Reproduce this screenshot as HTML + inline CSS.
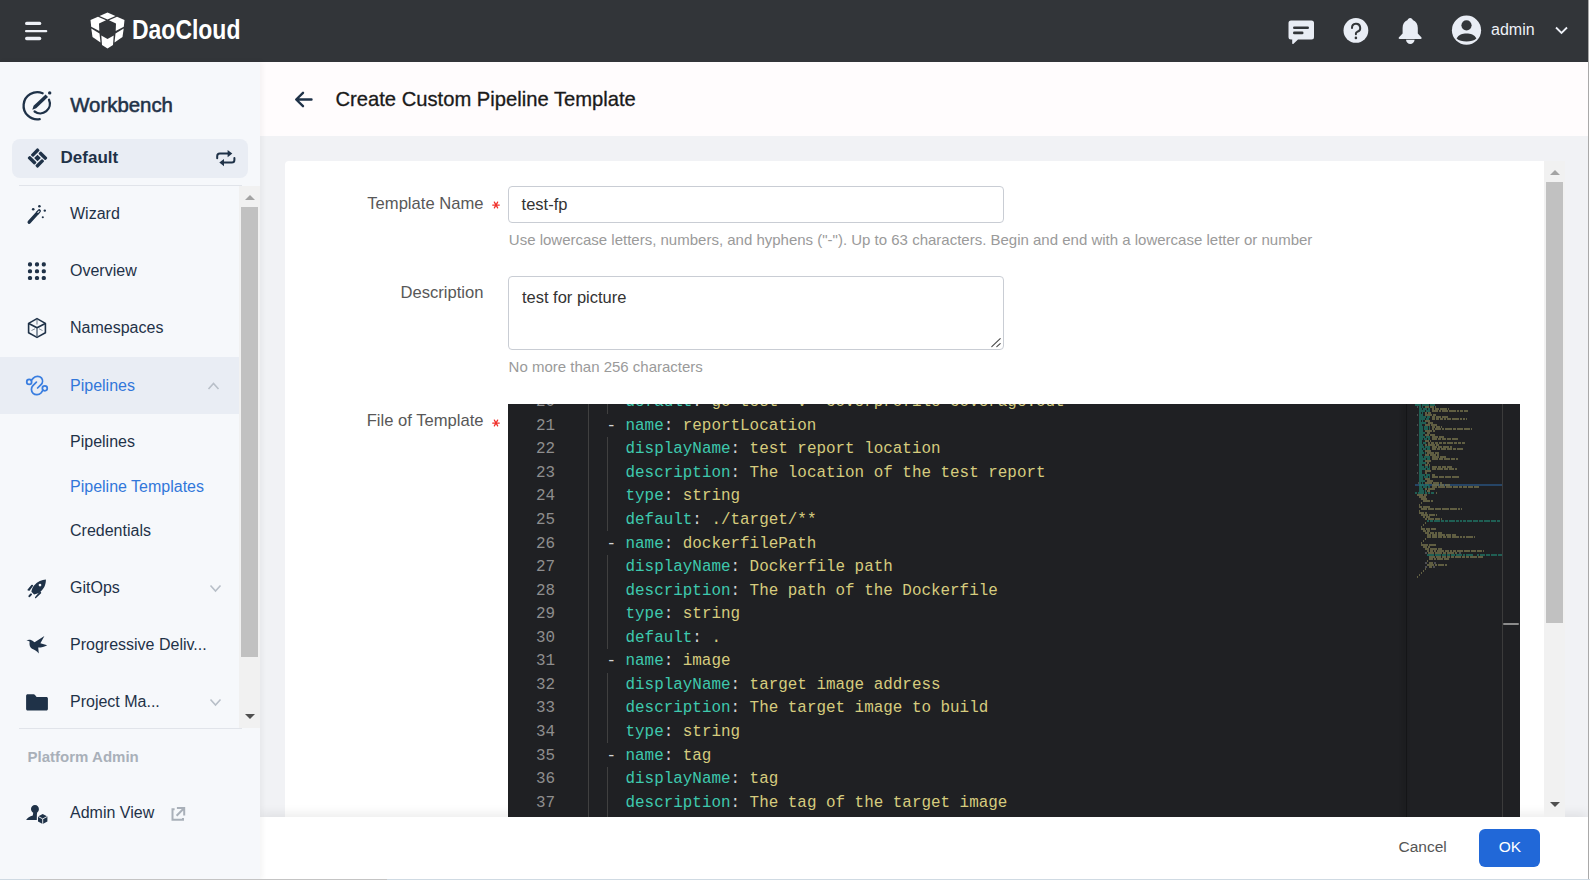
<!DOCTYPE html>
<html><head><meta charset="utf-8"><title>Create Custom Pipeline Template</title>
<style>
html,body{margin:0;padding:0;}
body{width:1590px;height:880px;overflow:hidden;position:relative;background:#f6f8fb;font-family:"Liberation Sans", sans-serif;}
.t{position:absolute;white-space:nowrap;line-height:1;}
.r{position:absolute;}
.a{position:absolute;display:block;}
.m{position:absolute;white-space:pre;font-family:"Liberation Mono", monospace;font-size:15.92px;line-height:1;}
</style></head><body>
<div class="r" style="left:0px;top:0px;width:1588px;height:62px;background:#323539"></div>
<div class="r" style="left:260px;top:62px;width:1328px;height:74px;background:#fffcfd"></div>
<div class="r" style="left:260px;top:136px;width:1328px;height:681px;background:#f1f2f5"></div>
<div class="r" style="left:285px;top:161px;width:1279px;height:669px;background:#ffffff;border-radius:4px 4px 0 0"></div>
<div class="r" style="left:260px;top:817px;width:1328px;height:63px;background:#ffffff;box-shadow:0 -4px 10px rgba(0,0,0,0.07)"></div>
<div class="r" style="left:0px;top:62px;width:260px;height:818px;background:#f6f8fb;box-shadow:2px 0 6px rgba(0,0,0,0.05)"></div>
<div class="r" style="left:1588px;top:0px;width:1px;height:880px;background:#a9a9a9"></div>
<div class="r" style="left:1589px;top:0px;width:1px;height:880px;background:#ffffff"></div>
<div class="r" style="left:0px;top:879px;width:1590px;height:1px;background:#cfdae3"></div>
<div class="r" style="left:30px;top:879px;width:357px;height:1px;background:#c4c4c4"></div>
<svg class="a" style="left:24px;top:21px" width="24" height="20" viewBox="0 0 24 20">
<rect x="1" y="0.7" width="16.3" height="3.4" rx="1.7" fill="#eef1f7"/>
<rect x="1" y="9" width="22.3" height="2.3" rx="1.1" fill="#eef1f7"/>
<rect x="1" y="15.8" width="16.3" height="3.4" rx="1.7" fill="#eef1f7"/>
</svg><svg class="a" style="left:90px;top:12px" width="35" height="37" viewBox="0 0 35 37">
<g fill="#ffffff">
<polygon points="9.5,4 17.5,0.5 25.5,4 17.5,7.6"/>
<polygon points="0.5,8 8,4.7 16,8.3 9,11.5 9.3,19 1.2,14.7"/>
<polygon points="34.5,8 27,4.7 19,8.3 26,11.5 25.7,19 33.8,14.7"/>
<polygon points="1.3,16.5 9.5,21.5 10.5,30.5 2.5,25"/>
<polygon points="33.7,16.5 25.5,21.5 24.5,30.5 32.5,25"/>
<polygon points="11.3,23.5 17.5,27 23.7,23.5 23,33 17.5,36.5 12,33"/>
</g></svg><div class="t " style="left:132px;top:16.10px;font-size:28px;color:#ffffff;font-weight:bold;transform:scaleX(0.82);transform-origin:0 0;">DaoCloud</div>
<svg class="a" style="left:1288px;top:20px" width="27" height="25" viewBox="0 0 27 25">
<path d="M3 0.5 H23.5 A2.5 2.5 0 0 1 26 3 V17 A2.5 2.5 0 0 1 23.5 19.5 H10 L5.5 23.8 A0.8 0.8 0 0 1 4.2 23.2 V19.5 H3 A2.5 2.5 0 0 1 0.5 17 V3 A2.5 2.5 0 0 1 3 0.5 Z" fill="#e9edf5"/>
<rect x="5" y="6.5" width="16" height="2.6" rx="1.3" fill="#323539"/>
<rect x="5" y="11.6" width="10.5" height="2.6" rx="1.3" fill="#323539"/>
</svg><svg class="a" style="left:1343px;top:17px" width="26" height="27" viewBox="0 0 26 27">
<circle cx="12.9" cy="13.4" r="12.4" fill="#e9edf5"/>
<path d="M9 10.9 A4.1 4.1 0 1 1 14.2 14.8 C13.3 15.2 12.9 15.7 12.9 16.6 V17.3" fill="none" stroke="#323539" stroke-width="2" stroke-linecap="round"/>
<circle cx="12.9" cy="20.9" r="1.3" fill="#323539"/>
</svg><svg class="a" style="left:1398px;top:17px" width="25" height="28" viewBox="0 0 25 28">
<path d="M12.2 1 C13.6 1 14.6 2 14.8 3.1 C18 4.2 19.8 7.2 19.8 11 V16.6 L23.3 20.2 C24 21 23.6 21.9 22.6 21.9 H1.7 C0.7 21.9 0.3 21 1 20.2 L4.6 16.6 V11 C4.6 7.2 6.4 4.2 9.6 3.1 C9.8 2 10.8 1 12.2 1 Z" fill="#e9edf5"/>
<path d="M8 22.7 H16.6 C16.4 25.2 14.5 27 12.3 27 C10.1 27 8.2 25.2 8 22.7 Z" fill="#e9edf5"/>
</svg><svg class="a" style="left:1451px;top:14.5px" width="31" height="31" viewBox="0 0 31 31">
<circle cx="15.5" cy="15.2" r="14.6" fill="#e9edf5"/>
<circle cx="15.5" cy="10.3" r="5.1" fill="#323539"/>
<path d="M5.6 23.6 C7.5 19.8 11.5 18.6 15.5 18.6 C19.5 18.6 23.5 19.8 25.4 23.6 C23 25.8 19.5 26.6 15.5 26.6 C11.5 26.6 8 25.8 5.6 23.6 Z" fill="#323539"/>
</svg><div class="t " style="left:1491px;top:22.46px;font-size:16px;color:#eef1f7;">admin</div>
<svg class="a" style="left:1555px;top:26px" width="13" height="9" viewBox="0 0 13 9">
<path d="M1 1.5 L6.5 7 L12 1.5" fill="none" stroke="#eef1f7" stroke-width="1.8"/></svg><div class="t " style="left:70.2px;top:95.23px;font-size:20.4px;color:#1f3248;-webkit-text-stroke:0.55px #1f3248;">Workbench</div>
<div class="r" style="left:12px;top:139px;width:236px;height:39px;background:#e9edf4;border-radius:8px"></div>
<div class="t " style="left:60.6px;top:149.41px;font-size:17px;color:#1f3248;font-weight:bold;">Default</div>
<div class="r" style="left:19px;top:184.5px;width:223px;height:1.0px;background:#e1e4ea"></div>
<div class="r" style="left:0px;top:357px;width:240px;height:57px;background:#e9edf4"></div>
<div class="t " style="left:70px;top:206.26px;font-size:16px;color:#1f3248;">Wizard</div>
<div class="t " style="left:70px;top:263.06px;font-size:16px;color:#1f3248;">Overview</div>
<div class="t " style="left:70px;top:320.06px;font-size:16px;color:#1f3248;">Namespaces</div>
<div class="t " style="left:70px;top:377.56px;font-size:16px;color:#3177da;">Pipelines</div>
<div class="t " style="left:70px;top:434.36px;font-size:16px;color:#1f3248;">Pipelines</div>
<div class="t " style="left:70px;top:479.06px;font-size:16px;color:#3177da;">Pipeline Templates</div>
<div class="t " style="left:70px;top:523.06px;font-size:16px;color:#1f3248;">Credentials</div>
<div class="t " style="left:70px;top:580.26px;font-size:16px;color:#1f3248;">GitOps</div>
<div class="t " style="left:70px;top:636.86px;font-size:16px;color:#1f3248;">Progressive Deliv...</div>
<div class="t " style="left:70px;top:693.86px;font-size:16px;color:#1f3248;">Project Ma...</div>
<div class="t " style="left:70px;top:805.26px;font-size:16px;color:#1f3248;">Admin View</div>
<div class="r" style="left:19px;top:727.5px;width:223px;height:1.0px;background:#e1e4ea"></div>
<div class="t " style="left:27.6px;top:748.60px;font-size:15px;color:#a9b0b9;font-weight:bold;">Platform Admin</div>
<div class="r" style="left:239px;top:186px;width:21px;height:541.5px;background:#f1f1f1"></div>
<div class="r" style="left:241px;top:207px;width:17px;height:450px;background:#c1c1c1"></div>
<svg class="a" style="left:244.5px;top:194px" width="10" height="6" viewBox="0 0 10 6"><path d="M0 6 L5 1 L10 6 Z" fill="#a3a3a3"/></svg><svg class="a" style="left:244.5px;top:714px" width="10" height="6" viewBox="0 0 10 6"><path d="M0 0 L5 5 L10 0 Z" fill="#505050"/></svg><svg class="a" style="left:207px;top:381px" width="13" height="9" viewBox="0 0 13 9"><path d="M1.5 8 L6.5 2.5 L11.5 8" fill="none" stroke="#b8bfc8" stroke-width="1.6"/></svg><svg class="a" style="left:209px;top:584px" width="13" height="9" viewBox="0 0 13 9"><path d="M1.5 1.5 L6.5 7 L11.5 1.5" fill="none" stroke="#b8bfc8" stroke-width="1.6"/></svg><svg class="a" style="left:209px;top:698px" width="13" height="9" viewBox="0 0 13 9"><path d="M1.5 1.5 L6.5 7 L11.5 1.5" fill="none" stroke="#b8bfc8" stroke-width="1.6"/></svg><svg class="a" style="left:294px;top:91px" width="19" height="17" viewBox="0 0 19 17">
<path d="M17.5 8.5 H3 M9 1.8 L2.2 8.5 L9 15.2" fill="none" stroke="#1f3248" stroke-width="2.4" stroke-linecap="round" stroke-linejoin="round"/></svg><div class="t " style="left:335.5px;top:88.60px;font-size:20.2px;color:#1a1a1a;-webkit-text-stroke:0.3px #1a1a1a;">Create Custom Pipeline Template</div>
<div class="t " style="right:1106.5px;top:195.65px;font-size:16.6px;color:#585858;">Template Name</div>
<svg class="a" style="left:491.5px;top:200.5px" width="8" height="8" viewBox="-4 -4 8 8"><g stroke="#f0302a" stroke-width="1.25" stroke-linecap="round"><path d="M-3.3 0 H3.3"/><path d="M-1.65 -2.86 L1.65 2.86"/><path d="M1.65 -2.86 L-1.65 2.86"/></g></svg><div class="r" style="left:508px;top:186px;width:496px;height:37px;border:1px solid #c9cdd4;border-radius:4px;box-sizing:border-box;background:#fff"></div>
<div class="t " style="left:521.6px;top:196.43px;font-size:16.5px;color:#333333;">test-fp</div>
<div class="t " style="left:508.8px;top:232.30px;font-size:15px;color:#9a9a9a;">Use lowercase letters, numbers, and hyphens ("-"). Up to 63 characters. Begin and end with a lowercase letter or number</div>
<div class="t " style="right:1106.5px;top:285.35px;font-size:16.6px;color:#585858;">Description</div>
<div class="r" style="left:508px;top:276px;width:496px;height:74px;border:1px solid #c9cdd4;border-radius:4px;box-sizing:border-box;background:#fff"></div>
<div class="t " style="left:521.9px;top:289.23px;font-size:16.5px;color:#333333;">test for picture</div>
<svg class="a" style="left:990px;top:336px" width="12" height="12" viewBox="0 0 12 12"><path d="M10.2 2.6 L1.8 10.6 M10.2 7.6 L6.8 10.6" stroke="#4a4a4a" stroke-width="1.15" stroke-linecap="round"/></svg><div class="t " style="left:508.6px;top:359.30px;font-size:15px;color:#9a9a9a;">No more than 256 characters</div>
<div class="t " style="right:1106.5px;top:413.35px;font-size:16.6px;color:#585858;">File of Template</div>
<svg class="a" style="left:491.5px;top:418.6px" width="8" height="8" viewBox="-4 -4 8 8"><g stroke="#f0302a" stroke-width="1.25" stroke-linecap="round"><path d="M-3.3 0 H3.3"/><path d="M-1.65 -2.86 L1.65 2.86"/><path d="M1.65 -2.86 L-1.65 2.86"/></g></svg><div class="a" id="ed" style="left:508px;top:404px;width:1012px;height:413px;background:#1f2023;overflow:hidden"><div class="m" style="right:965px;top:-8.75px;color:#8e8e8e">20</div><div class="m" style="left:117.52px;top:-8.75px"><span style="color:#3ec9ae">default</span><span style="color:#d4d4d4">: </span><span style="color:#d6cc7e">go test -v -coverprofile=coverage.out</span></div><div class="m" style="right:965px;top:14.80px;color:#8e8e8e">21</div><div class="m" style="left:98.41px;top:14.80px"><span style="color:#d4d4d4">- </span><span style="color:#3ec9ae">name</span><span style="color:#d4d4d4">: </span><span style="color:#d6cc7e">reportLocation</span></div><div class="m" style="right:965px;top:38.35px;color:#8e8e8e">22</div><div class="m" style="left:117.52px;top:38.35px"><span style="color:#3ec9ae">displayName</span><span style="color:#d4d4d4">: </span><span style="color:#d6cc7e">test report location</span></div><div class="m" style="right:965px;top:61.90px;color:#8e8e8e">23</div><div class="m" style="left:117.52px;top:61.90px"><span style="color:#3ec9ae">description</span><span style="color:#d4d4d4">: </span><span style="color:#d6cc7e">The location of the test report</span></div><div class="m" style="right:965px;top:85.45px;color:#8e8e8e">24</div><div class="m" style="left:117.52px;top:85.45px"><span style="color:#3ec9ae">type</span><span style="color:#d4d4d4">: </span><span style="color:#d6cc7e">string</span></div><div class="m" style="right:965px;top:109.00px;color:#8e8e8e">25</div><div class="m" style="left:117.52px;top:109.00px"><span style="color:#3ec9ae">default</span><span style="color:#d4d4d4">: </span><span style="color:#d6cc7e">./target/**</span></div><div class="m" style="right:965px;top:132.55px;color:#8e8e8e">26</div><div class="m" style="left:98.41px;top:132.55px"><span style="color:#d4d4d4">- </span><span style="color:#3ec9ae">name</span><span style="color:#d4d4d4">: </span><span style="color:#d6cc7e">dockerfilePath</span></div><div class="m" style="right:965px;top:156.10px;color:#8e8e8e">27</div><div class="m" style="left:117.52px;top:156.10px"><span style="color:#3ec9ae">displayName</span><span style="color:#d4d4d4">: </span><span style="color:#d6cc7e">Dockerfile path</span></div><div class="m" style="right:965px;top:179.65px;color:#8e8e8e">28</div><div class="m" style="left:117.52px;top:179.65px"><span style="color:#3ec9ae">description</span><span style="color:#d4d4d4">: </span><span style="color:#d6cc7e">The path of the Dockerfile</span></div><div class="m" style="right:965px;top:203.20px;color:#8e8e8e">29</div><div class="m" style="left:117.52px;top:203.20px"><span style="color:#3ec9ae">type</span><span style="color:#d4d4d4">: </span><span style="color:#d6cc7e">string</span></div><div class="m" style="right:965px;top:226.75px;color:#8e8e8e">30</div><div class="m" style="left:117.52px;top:226.75px"><span style="color:#3ec9ae">default</span><span style="color:#d4d4d4">: </span><span style="color:#d6cc7e">.</span></div><div class="m" style="right:965px;top:250.30px;color:#8e8e8e">31</div><div class="m" style="left:98.41px;top:250.30px"><span style="color:#d4d4d4">- </span><span style="color:#3ec9ae">name</span><span style="color:#d4d4d4">: </span><span style="color:#d6cc7e">image</span></div><div class="m" style="right:965px;top:273.85px;color:#8e8e8e">32</div><div class="m" style="left:117.52px;top:273.85px"><span style="color:#3ec9ae">displayName</span><span style="color:#d4d4d4">: </span><span style="color:#d6cc7e">target image address</span></div><div class="m" style="right:965px;top:297.40px;color:#8e8e8e">33</div><div class="m" style="left:117.52px;top:297.40px"><span style="color:#3ec9ae">description</span><span style="color:#d4d4d4">: </span><span style="color:#d6cc7e">The target image to build</span></div><div class="m" style="right:965px;top:320.95px;color:#8e8e8e">34</div><div class="m" style="left:117.52px;top:320.95px"><span style="color:#3ec9ae">type</span><span style="color:#d4d4d4">: </span><span style="color:#d6cc7e">string</span></div><div class="m" style="right:965px;top:344.50px;color:#8e8e8e">35</div><div class="m" style="left:98.41px;top:344.50px"><span style="color:#d4d4d4">- </span><span style="color:#3ec9ae">name</span><span style="color:#d4d4d4">: </span><span style="color:#d6cc7e">tag</span></div><div class="m" style="right:965px;top:368.05px;color:#8e8e8e">36</div><div class="m" style="left:117.52px;top:368.05px"><span style="color:#3ec9ae">displayName</span><span style="color:#d4d4d4">: </span><span style="color:#d6cc7e">tag</span></div><div class="m" style="right:965px;top:391.60px;color:#8e8e8e">37</div><div class="m" style="left:117.52px;top:391.60px"><span style="color:#3ec9ae">description</span><span style="color:#d4d4d4">: </span><span style="color:#d6cc7e">The tag of the target image</span></div><div class="m" style="right:965px;top:415.15px;color:#8e8e8e">38</div><div class="m" style="left:117.52px;top:415.15px"><span style="color:#3ec9ae">type</span><span style="color:#d4d4d4">: </span><span style="color:#d6cc7e">string</span></div><div class="r" style="left:80px;top:0;width:1px;height:413px;background:#404040"></div><div class="r" style="left:99px;top:-14.05px;width:1px;height:23.55px;background:#404040"></div><div class="r" style="left:99px;top:33.05px;width:1px;height:23.55px;background:#404040"></div><div class="r" style="left:99px;top:56.60px;width:1px;height:23.55px;background:#404040"></div><div class="r" style="left:99px;top:80.15px;width:1px;height:23.55px;background:#404040"></div><div class="r" style="left:99px;top:103.70px;width:1px;height:23.55px;background:#404040"></div><div class="r" style="left:99px;top:150.80px;width:1px;height:23.55px;background:#404040"></div><div class="r" style="left:99px;top:174.35px;width:1px;height:23.55px;background:#404040"></div><div class="r" style="left:99px;top:197.90px;width:1px;height:23.55px;background:#404040"></div><div class="r" style="left:99px;top:221.45px;width:1px;height:23.55px;background:#404040"></div><div class="r" style="left:99px;top:268.55px;width:1px;height:23.55px;background:#404040"></div><div class="r" style="left:99px;top:292.10px;width:1px;height:23.55px;background:#404040"></div><div class="r" style="left:99px;top:315.65px;width:1px;height:23.55px;background:#404040"></div><div class="r" style="left:99px;top:362.75px;width:1px;height:23.55px;background:#404040"></div><div class="r" style="left:99px;top:386.30px;width:1px;height:23.55px;background:#404040"></div><div class="r" style="left:99px;top:409.85px;width:1px;height:23.55px;background:#404040"></div><div class="r" style="left:898px;top:0;width:1px;height:413px;background:#141517;box-shadow:-2px 0 4px rgba(0,0,0,0.5)"></div><div class="r" style="left:994px;top:0;width:1px;height:413px;background:#3b3b3b"></div><div class="r" style="left:995px;top:218.79999999999995px;width:16px;height:2.6px;background:#8c8c8c;border-radius:1px"></div><svg class="a" style="left:0;top:0" width="1012" height="413"><rect x="907" y="80" width="87" height="2" fill="#264566"/><rect x="907" y="0.25" width="6" height="1.5" fill="#217466"/><rect x="914" y="0.25" width="7" height="1.5" fill="#217466"/><rect x="922" y="0.25" width="5" height="1.5" fill="#217466"/><rect x="909" y="2.25" width="1" height="1.5" fill="#5a5a5a"/><rect x="911" y="2.25" width="2" height="1.5" fill="#217466"/><rect x="914" y="2.25" width="1" height="1.5" fill="#217466"/><rect x="917" y="2.25" width="4" height="1.5" fill="#77734e"/><rect x="922" y="2.25" width="4" height="1.5" fill="#77734e"/><rect x="927" y="2.25" width="1" height="1.5" fill="#77734e"/><rect x="911" y="4.25" width="3" height="1.5" fill="#217466"/><rect x="915" y="4.25" width="4" height="1.5" fill="#217466"/><rect x="920" y="4.25" width="2" height="1.5" fill="#217466"/><rect x="924" y="4.25" width="2" height="1.5" fill="#77734e"/><rect x="927" y="4.25" width="4" height="1.5" fill="#77734e"/><rect x="932" y="4.25" width="7" height="1.5" fill="#77734e"/><rect x="940" y="4.25" width="1" height="1.5" fill="#77734e"/><rect x="911" y="6.25" width="6" height="1.5" fill="#217466"/><rect x="918" y="6.25" width="4" height="1.5" fill="#217466"/><rect x="924" y="6.25" width="6" height="1.5" fill="#77734e"/><rect x="931" y="6.25" width="2" height="1.5" fill="#77734e"/><rect x="934" y="6.25" width="6" height="1.5" fill="#77734e"/><rect x="941" y="6.25" width="7" height="1.5" fill="#77734e"/><rect x="949" y="6.25" width="2" height="1.5" fill="#77734e"/><rect x="952" y="6.25" width="3" height="1.5" fill="#77734e"/><rect x="956" y="6.25" width="4" height="1.5" fill="#77734e"/><rect x="911" y="8.25" width="2" height="1.5" fill="#217466"/><rect x="914" y="8.25" width="1" height="1.5" fill="#217466"/><rect x="917" y="8.25" width="2" height="1.5" fill="#77734e"/><rect x="920" y="8.25" width="3" height="1.5" fill="#77734e"/><rect x="909" y="10.25" width="1" height="1.5" fill="#5a5a5a"/><rect x="911" y="10.25" width="4" height="1.5" fill="#217466"/><rect x="917" y="10.25" width="7" height="1.5" fill="#77734e"/><rect x="925" y="10.25" width="3" height="1.5" fill="#77734e"/><rect x="911" y="12.25" width="7" height="1.5" fill="#217466"/><rect x="919" y="12.25" width="3" height="1.5" fill="#217466"/><rect x="924" y="12.25" width="3" height="1.5" fill="#77734e"/><rect x="928" y="12.25" width="5" height="1.5" fill="#77734e"/><rect x="934" y="12.25" width="6" height="1.5" fill="#77734e"/><rect x="911" y="14.25" width="6" height="1.5" fill="#217466"/><rect x="918" y="14.25" width="3" height="1.5" fill="#217466"/><rect x="924" y="14.25" width="3" height="1.5" fill="#77734e"/><rect x="928" y="14.25" width="3" height="1.5" fill="#77734e"/><rect x="932" y="14.25" width="3" height="1.5" fill="#77734e"/><rect x="936" y="14.25" width="2" height="1.5" fill="#77734e"/><rect x="939" y="14.25" width="4" height="1.5" fill="#77734e"/><rect x="944" y="14.25" width="7" height="1.5" fill="#77734e"/><rect x="952" y="14.25" width="2" height="1.5" fill="#77734e"/><rect x="955" y="14.25" width="2" height="1.5" fill="#77734e"/><rect x="958" y="14.25" width="1" height="1.5" fill="#77734e"/><rect x="911" y="16.25" width="2" height="1.5" fill="#217466"/><rect x="914" y="16.25" width="1" height="1.5" fill="#217466"/><rect x="917" y="16.25" width="5" height="1.5" fill="#77734e"/><rect x="911" y="18.25" width="7" height="1.5" fill="#217466"/><rect x="920" y="18.25" width="5" height="1.5" fill="#77734e"/><rect x="909" y="20.25" width="1" height="1.5" fill="#5a5a5a"/><rect x="911" y="20.25" width="3" height="1.5" fill="#217466"/><rect x="917" y="20.25" width="5" height="1.5" fill="#77734e"/><rect x="923" y="20.25" width="6" height="1.5" fill="#77734e"/><rect x="911" y="22.25" width="4" height="1.5" fill="#217466"/><rect x="916" y="22.25" width="4" height="1.5" fill="#217466"/><rect x="921" y="22.25" width="1" height="1.5" fill="#217466"/><rect x="924" y="22.25" width="3" height="1.5" fill="#77734e"/><rect x="928" y="22.25" width="4" height="1.5" fill="#77734e"/><rect x="933" y="22.25" width="1" height="1.5" fill="#77734e"/><rect x="911" y="24.25" width="4" height="1.5" fill="#217466"/><rect x="916" y="24.25" width="4" height="1.5" fill="#217466"/><rect x="921" y="24.25" width="1" height="1.5" fill="#217466"/><rect x="924" y="24.25" width="2" height="1.5" fill="#77734e"/><rect x="927" y="24.25" width="6" height="1.5" fill="#77734e"/><rect x="934" y="24.25" width="2" height="1.5" fill="#77734e"/><rect x="937" y="24.25" width="7" height="1.5" fill="#77734e"/><rect x="945" y="24.25" width="3" height="1.5" fill="#77734e"/><rect x="949" y="24.25" width="6" height="1.5" fill="#77734e"/><rect x="956" y="24.25" width="6" height="1.5" fill="#77734e"/><rect x="963" y="24.25" width="1" height="1.5" fill="#77734e"/><rect x="911" y="26.25" width="4" height="1.5" fill="#217466"/><rect x="917" y="26.25" width="7" height="1.5" fill="#77734e"/><rect x="925" y="26.25" width="2" height="1.5" fill="#77734e"/><rect x="911" y="28.25" width="6" height="1.5" fill="#217466"/><rect x="919" y="28.25" width="3" height="1.5" fill="#77734e"/><rect x="909" y="30.25" width="1" height="1.5" fill="#5a5a5a"/><rect x="911" y="30.25" width="4" height="1.5" fill="#217466"/><rect x="917" y="30.25" width="4" height="1.5" fill="#77734e"/><rect x="922" y="30.25" width="5" height="1.5" fill="#77734e"/><rect x="911" y="32.25" width="6" height="1.5" fill="#217466"/><rect x="918" y="32.25" width="4" height="1.5" fill="#217466"/><rect x="924" y="32.25" width="6" height="1.5" fill="#77734e"/><rect x="931" y="32.25" width="5" height="1.5" fill="#77734e"/><rect x="911" y="34.25" width="4" height="1.5" fill="#217466"/><rect x="916" y="34.25" width="3" height="1.5" fill="#217466"/><rect x="920" y="34.25" width="2" height="1.5" fill="#217466"/><rect x="924" y="34.25" width="5" height="1.5" fill="#77734e"/><rect x="930" y="34.25" width="3" height="1.5" fill="#77734e"/><rect x="934" y="34.25" width="4" height="1.5" fill="#77734e"/><rect x="939" y="34.25" width="4" height="1.5" fill="#77734e"/><rect x="944" y="34.25" width="6" height="1.5" fill="#77734e"/><rect x="911" y="36.25" width="3" height="1.5" fill="#217466"/><rect x="917" y="36.25" width="4" height="1.5" fill="#77734e"/><rect x="922" y="36.25" width="1" height="1.5" fill="#77734e"/><rect x="911" y="38.25" width="3" height="1.5" fill="#217466"/><rect x="915" y="38.25" width="3" height="1.5" fill="#217466"/><rect x="920" y="38.25" width="2" height="1.5" fill="#77734e"/><rect x="923" y="38.25" width="3" height="1.5" fill="#77734e"/><rect x="927" y="38.25" width="3" height="1.5" fill="#77734e"/><rect x="931" y="38.25" width="3" height="1.5" fill="#77734e"/><rect x="935" y="38.25" width="3" height="1.5" fill="#77734e"/><rect x="939" y="38.25" width="6" height="1.5" fill="#77734e"/><rect x="946" y="38.25" width="3" height="1.5" fill="#77734e"/><rect x="950" y="38.25" width="3" height="1.5" fill="#77734e"/><rect x="954" y="38.25" width="3" height="1.5" fill="#77734e"/><rect x="909" y="40.25" width="1" height="1.5" fill="#5a5a5a"/><rect x="911" y="40.25" width="4" height="1.5" fill="#217466"/><rect x="917" y="40.25" width="2" height="1.5" fill="#77734e"/><rect x="920" y="40.25" width="7" height="1.5" fill="#77734e"/><rect x="928" y="40.25" width="3" height="1.5" fill="#77734e"/><rect x="911" y="42.25" width="5" height="1.5" fill="#217466"/><rect x="917" y="42.25" width="5" height="1.5" fill="#217466"/><rect x="924" y="42.25" width="5" height="1.5" fill="#77734e"/><rect x="930" y="42.25" width="4" height="1.5" fill="#77734e"/><rect x="935" y="42.25" width="6" height="1.5" fill="#77734e"/><rect x="942" y="42.25" width="2" height="1.5" fill="#77734e"/><rect x="911" y="44.25" width="3" height="1.5" fill="#217466"/><rect x="915" y="44.25" width="3" height="1.5" fill="#217466"/><rect x="919" y="44.25" width="3" height="1.5" fill="#217466"/><rect x="924" y="44.25" width="4" height="1.5" fill="#77734e"/><rect x="929" y="44.25" width="3" height="1.5" fill="#77734e"/><rect x="933" y="44.25" width="5" height="1.5" fill="#77734e"/><rect x="939" y="44.25" width="5" height="1.5" fill="#77734e"/><rect x="945" y="44.25" width="3" height="1.5" fill="#77734e"/><rect x="949" y="44.25" width="6" height="1.5" fill="#77734e"/><rect x="911" y="46.25" width="4" height="1.5" fill="#217466"/><rect x="917" y="46.25" width="6" height="1.5" fill="#77734e"/><rect x="911" y="48.25" width="5" height="1.5" fill="#217466"/><rect x="917" y="48.25" width="1" height="1.5" fill="#217466"/><rect x="919" y="48.25" width="7" height="1.5" fill="#77734e"/><rect x="927" y="48.25" width="4" height="1.5" fill="#77734e"/><rect x="909" y="50.25" width="1" height="1.5" fill="#5a5a5a"/><rect x="911" y="50.25" width="3" height="1.5" fill="#217466"/><rect x="917" y="50.25" width="4" height="1.5" fill="#77734e"/><rect x="922" y="50.25" width="6" height="1.5" fill="#77734e"/><rect x="929" y="50.25" width="2" height="1.5" fill="#77734e"/><rect x="911" y="52.25" width="4" height="1.5" fill="#217466"/><rect x="916" y="52.25" width="6" height="1.5" fill="#217466"/><rect x="924" y="52.25" width="7" height="1.5" fill="#77734e"/><rect x="932" y="52.25" width="6" height="1.5" fill="#77734e"/><rect x="911" y="54.25" width="7" height="1.5" fill="#217466"/><rect x="919" y="54.25" width="3" height="1.5" fill="#217466"/><rect x="924" y="54.25" width="6" height="1.5" fill="#77734e"/><rect x="931" y="54.25" width="4" height="1.5" fill="#77734e"/><rect x="936" y="54.25" width="6" height="1.5" fill="#77734e"/><rect x="943" y="54.25" width="4" height="1.5" fill="#77734e"/><rect x="948" y="54.25" width="2" height="1.5" fill="#77734e"/><rect x="911" y="56.25" width="4" height="1.5" fill="#217466"/><rect x="917" y="56.25" width="6" height="1.5" fill="#77734e"/><rect x="911" y="58.25" width="7" height="1.5" fill="#217466"/><rect x="919" y="58.25" width="2" height="1.5" fill="#77734e"/><rect x="909" y="60.25" width="1" height="1.5" fill="#5a5a5a"/><rect x="911" y="60.25" width="3" height="1.5" fill="#217466"/><rect x="917" y="60.25" width="3" height="1.5" fill="#77734e"/><rect x="921" y="60.25" width="1" height="1.5" fill="#77734e"/><rect x="911" y="62.25" width="5" height="1.5" fill="#217466"/><rect x="917" y="62.25" width="3" height="1.5" fill="#217466"/><rect x="921" y="62.25" width="1" height="1.5" fill="#217466"/><rect x="924" y="62.25" width="5" height="1.5" fill="#77734e"/><rect x="930" y="62.25" width="3" height="1.5" fill="#77734e"/><rect x="934" y="62.25" width="4" height="1.5" fill="#77734e"/><rect x="939" y="62.25" width="5" height="1.5" fill="#77734e"/><rect x="911" y="64.25" width="7" height="1.5" fill="#217466"/><rect x="919" y="64.25" width="3" height="1.5" fill="#217466"/><rect x="924" y="64.25" width="4" height="1.5" fill="#77734e"/><rect x="929" y="64.25" width="6" height="1.5" fill="#77734e"/><rect x="936" y="64.25" width="4" height="1.5" fill="#77734e"/><rect x="941" y="64.25" width="5" height="1.5" fill="#77734e"/><rect x="947" y="64.25" width="2" height="1.5" fill="#77734e"/><rect x="911" y="66.25" width="3" height="1.5" fill="#217466"/><rect x="917" y="66.25" width="6" height="1.5" fill="#77734e"/><rect x="909" y="68.25" width="1" height="1.5" fill="#5a5a5a"/><rect x="911" y="68.25" width="3" height="1.5" fill="#217466"/><rect x="917" y="68.25" width="2" height="1.5" fill="#77734e"/><rect x="911" y="70.25" width="6" height="1.5" fill="#217466"/><rect x="918" y="70.25" width="4" height="1.5" fill="#217466"/><rect x="924" y="70.25" width="3" height="1.5" fill="#77734e"/><rect x="911" y="72.25" width="4" height="1.5" fill="#217466"/><rect x="916" y="72.25" width="4" height="1.5" fill="#217466"/><rect x="921" y="72.25" width="1" height="1.5" fill="#217466"/><rect x="924" y="72.25" width="6" height="1.5" fill="#77734e"/><rect x="931" y="72.25" width="5" height="1.5" fill="#77734e"/><rect x="937" y="72.25" width="6" height="1.5" fill="#77734e"/><rect x="944" y="72.25" width="7" height="1.5" fill="#77734e"/><rect x="911" y="74.25" width="4" height="1.5" fill="#217466"/><rect x="917" y="74.25" width="5" height="1.5" fill="#77734e"/><rect x="911" y="76.25" width="6" height="1.5" fill="#217466"/><rect x="919" y="76.25" width="6" height="1.5" fill="#77734e"/><rect x="910" y="78.25" width="1" height="1.5" fill="#5a5a5a"/><rect x="911" y="78.25" width="2" height="1.5" fill="#217466"/><rect x="914" y="78.25" width="1" height="1.5" fill="#217466"/><rect x="917" y="78.25" width="7" height="1.5" fill="#77734e"/><rect x="925" y="78.25" width="6" height="1.5" fill="#77734e"/><rect x="932" y="78.25" width="2" height="1.5" fill="#77734e"/><rect x="911" y="80.25" width="5" height="1.5" fill="#217466"/><rect x="917" y="80.25" width="4" height="1.5" fill="#217466"/><rect x="924" y="80.25" width="7" height="1.5" fill="#77734e"/><rect x="932" y="80.25" width="4" height="1.5" fill="#77734e"/><rect x="937" y="80.25" width="5" height="1.5" fill="#77734e"/><rect x="911" y="82.25" width="3" height="1.5" fill="#217466"/><rect x="915" y="82.25" width="4" height="1.5" fill="#217466"/><rect x="920" y="82.25" width="2" height="1.5" fill="#217466"/><rect x="924" y="82.25" width="5" height="1.5" fill="#77734e"/><rect x="930" y="82.25" width="7" height="1.5" fill="#77734e"/><rect x="938" y="82.25" width="6" height="1.5" fill="#77734e"/><rect x="945" y="82.25" width="5" height="1.5" fill="#77734e"/><rect x="951" y="82.25" width="3" height="1.5" fill="#77734e"/><rect x="955" y="82.25" width="4" height="1.5" fill="#77734e"/><rect x="960" y="82.25" width="5" height="1.5" fill="#77734e"/><rect x="966" y="82.25" width="5" height="1.5" fill="#77734e"/><rect x="911" y="84.25" width="4" height="1.5" fill="#217466"/><rect x="917" y="84.25" width="2" height="1.5" fill="#77734e"/><rect x="920" y="84.25" width="7" height="1.5" fill="#77734e"/><rect x="911" y="86.25" width="5" height="1.5" fill="#217466"/><rect x="917" y="86.25" width="1" height="1.5" fill="#217466"/><rect x="919" y="86.25" width="3" height="1.5" fill="#77734e"/><rect x="907" y="88.25" width="2" height="1.5" fill="#217466"/><rect x="910" y="88.25" width="6" height="1.5" fill="#217466"/><rect x="917" y="88.25" width="2" height="1.5" fill="#217466"/><rect x="920" y="88.25" width="2" height="1.5" fill="#217466"/><rect x="923" y="88.25" width="3" height="1.5" fill="#217466"/><rect x="928" y="88.25" width="1" height="1.5" fill="#77734e"/><rect x="909" y="90.25" width="6" height="1.5" fill="#77734e"/><rect x="916" y="90.25" width="3" height="1.5" fill="#77734e"/><rect x="911" y="92.25" width="7" height="1.5" fill="#77734e"/><rect x="913" y="94.25" width="6" height="1.5" fill="#77734e"/><rect x="915" y="96.25" width="7" height="1.5" fill="#77734e"/><rect x="923" y="96.25" width="2" height="1.5" fill="#77734e"/><rect x="913" y="98.25" width="1" height="1.5" fill="#77734e"/><rect x="911" y="100.25" width="1" height="1.5" fill="#77734e"/><rect x="911" y="102.25" width="3" height="1.5" fill="#77734e"/><rect x="915" y="102.25" width="7" height="1.5" fill="#77734e"/><rect x="913" y="104.25" width="6" height="1.5" fill="#77734e"/><rect x="920" y="104.25" width="6" height="1.5" fill="#77734e"/><rect x="927" y="104.25" width="6" height="1.5" fill="#77734e"/><rect x="934" y="104.25" width="7" height="1.5" fill="#77734e"/><rect x="942" y="104.25" width="7" height="1.5" fill="#77734e"/><rect x="950" y="104.25" width="2" height="1.5" fill="#77734e"/><rect x="953" y="104.25" width="1" height="1.5" fill="#77734e"/><rect x="911" y="106.25" width="1" height="1.5" fill="#77734e"/><rect x="911" y="108.25" width="5" height="1.5" fill="#77734e"/><rect x="917" y="108.25" width="2" height="1.5" fill="#77734e"/><rect x="913" y="110.25" width="7" height="1.5" fill="#77734e"/><rect x="921" y="110.25" width="6" height="1.5" fill="#77734e"/><rect x="928" y="110.25" width="1" height="1.5" fill="#77734e"/><rect x="915" y="112.25" width="2" height="1.5" fill="#77734e"/><rect x="918" y="112.25" width="4" height="1.5" fill="#77734e"/><rect x="917" y="114.25" width="2" height="1.5" fill="#77734e"/><rect x="920" y="114.25" width="6" height="1.5" fill="#77734e"/><rect x="927" y="114.25" width="5" height="1.5" fill="#77734e"/><rect x="933" y="114.25" width="1" height="1.5" fill="#77734e"/><rect x="919" y="116.25" width="2" height="1.5" fill="#217466"/><rect x="922" y="116.25" width="3" height="1.5" fill="#217466"/><rect x="926" y="116.25" width="6" height="1.5" fill="#217466"/><rect x="933" y="116.25" width="3" height="1.5" fill="#217466"/><rect x="937" y="116.25" width="3" height="1.5" fill="#217466"/><rect x="941" y="116.25" width="6" height="1.5" fill="#217466"/><rect x="948" y="116.25" width="3" height="1.5" fill="#217466"/><rect x="952" y="116.25" width="2" height="1.5" fill="#217466"/><rect x="955" y="116.25" width="3" height="1.5" fill="#217466"/><rect x="959" y="116.25" width="5" height="1.5" fill="#217466"/><rect x="965" y="116.25" width="5" height="1.5" fill="#217466"/><rect x="971" y="116.25" width="4" height="1.5" fill="#217466"/><rect x="976" y="116.25" width="6" height="1.5" fill="#217466"/><rect x="983" y="116.25" width="5" height="1.5" fill="#217466"/><rect x="989" y="116.25" width="3" height="1.5" fill="#217466"/><rect x="917" y="118.25" width="1" height="1.5" fill="#77734e"/><rect x="915" y="120.25" width="1" height="1.5" fill="#77734e"/><rect x="913" y="122.25" width="1" height="1.5" fill="#77734e"/><rect x="913" y="124.25" width="4" height="1.5" fill="#77734e"/><rect x="918" y="124.25" width="4" height="1.5" fill="#77734e"/><rect x="923" y="124.25" width="5" height="1.5" fill="#77734e"/><rect x="915" y="126.25" width="3" height="1.5" fill="#77734e"/><rect x="919" y="126.25" width="3" height="1.5" fill="#77734e"/><rect x="917" y="128.25" width="4" height="1.5" fill="#77734e"/><rect x="922" y="128.25" width="4" height="1.5" fill="#77734e"/><rect x="927" y="128.25" width="2" height="1.5" fill="#77734e"/><rect x="930" y="128.25" width="4" height="1.5" fill="#77734e"/><rect x="919" y="130.25" width="4" height="1.5" fill="#77734e"/><rect x="924" y="130.25" width="5" height="1.5" fill="#77734e"/><rect x="930" y="130.25" width="7" height="1.5" fill="#77734e"/><rect x="938" y="130.25" width="5" height="1.5" fill="#77734e"/><rect x="944" y="130.25" width="4" height="1.5" fill="#77734e"/><rect x="919" y="132.25" width="4" height="1.5" fill="#77734e"/><rect x="924" y="132.25" width="5" height="1.5" fill="#77734e"/><rect x="930" y="132.25" width="4" height="1.5" fill="#77734e"/><rect x="935" y="132.25" width="3" height="1.5" fill="#77734e"/><rect x="939" y="132.25" width="4" height="1.5" fill="#77734e"/><rect x="944" y="132.25" width="7" height="1.5" fill="#77734e"/><rect x="952" y="132.25" width="2" height="1.5" fill="#77734e"/><rect x="955" y="132.25" width="2" height="1.5" fill="#77734e"/><rect x="958" y="132.25" width="7" height="1.5" fill="#77734e"/><rect x="966" y="132.25" width="1" height="1.5" fill="#77734e"/><rect x="917" y="134.25" width="1" height="1.5" fill="#77734e"/><rect x="915" y="136.25" width="1" height="1.5" fill="#77734e"/><rect x="913" y="138.25" width="1" height="1.5" fill="#77734e"/><rect x="913" y="140.25" width="7" height="1.5" fill="#77734e"/><rect x="921" y="140.25" width="7" height="1.5" fill="#77734e"/><rect x="915" y="142.25" width="4" height="1.5" fill="#77734e"/><rect x="920" y="142.25" width="2" height="1.5" fill="#77734e"/><rect x="917" y="144.25" width="4" height="1.5" fill="#77734e"/><rect x="922" y="144.25" width="7" height="1.5" fill="#77734e"/><rect x="930" y="144.25" width="4" height="1.5" fill="#77734e"/><rect x="919" y="146.25" width="2" height="1.5" fill="#77734e"/><rect x="922" y="146.25" width="3" height="1.5" fill="#77734e"/><rect x="926" y="146.25" width="2" height="1.5" fill="#77734e"/><rect x="929" y="146.25" width="7" height="1.5" fill="#77734e"/><rect x="937" y="146.25" width="4" height="1.5" fill="#77734e"/><rect x="942" y="146.25" width="2" height="1.5" fill="#77734e"/><rect x="945" y="146.25" width="3" height="1.5" fill="#77734e"/><rect x="949" y="146.25" width="6" height="1.5" fill="#77734e"/><rect x="956" y="146.25" width="6" height="1.5" fill="#77734e"/><rect x="963" y="146.25" width="5" height="1.5" fill="#77734e"/><rect x="969" y="146.25" width="5" height="1.5" fill="#77734e"/><rect x="975" y="146.25" width="1" height="1.5" fill="#77734e"/><rect x="917" y="148.25" width="2" height="1.5" fill="#5e5e64"/><rect x="920" y="148.25" width="6" height="1.5" fill="#77734e"/><rect x="927" y="148.25" width="7" height="1.5" fill="#77734e"/><rect x="935" y="148.25" width="3" height="1.5" fill="#77734e"/><rect x="939" y="148.25" width="7" height="1.5" fill="#77734e"/><rect x="947" y="148.25" width="2" height="1.5" fill="#77734e"/><rect x="951" y="148.25" width="2" height="1.5" fill="#5e5e64"/><rect x="919" y="150.25" width="7" height="1.5" fill="#217466"/><rect x="927" y="150.25" width="6" height="1.5" fill="#217466"/><rect x="934" y="150.25" width="4" height="1.5" fill="#217466"/><rect x="939" y="150.25" width="3" height="1.5" fill="#217466"/><rect x="943" y="150.25" width="4" height="1.5" fill="#217466"/><rect x="948" y="150.25" width="6" height="1.5" fill="#217466"/><rect x="955" y="150.25" width="2" height="1.5" fill="#217466"/><rect x="958" y="150.25" width="7" height="1.5" fill="#217466"/><rect x="969" y="150.25" width="2" height="1.5" fill="#217466"/><rect x="972" y="150.25" width="5" height="1.5" fill="#217466"/><rect x="978" y="150.25" width="4" height="1.5" fill="#217466"/><rect x="983" y="150.25" width="6" height="1.5" fill="#217466"/><rect x="990" y="150.25" width="4" height="1.5" fill="#217466"/><rect x="921" y="152.25" width="6" height="1.5" fill="#77734e"/><rect x="928" y="152.25" width="5" height="1.5" fill="#77734e"/><rect x="934" y="152.25" width="4" height="1.5" fill="#77734e"/><rect x="939" y="152.25" width="3" height="1.5" fill="#77734e"/><rect x="943" y="152.25" width="3" height="1.5" fill="#77734e"/><rect x="947" y="152.25" width="6" height="1.5" fill="#77734e"/><rect x="954" y="152.25" width="3" height="1.5" fill="#77734e"/><rect x="958" y="152.25" width="3" height="1.5" fill="#77734e"/><rect x="962" y="152.25" width="7" height="1.5" fill="#77734e"/><rect x="970" y="152.25" width="5" height="1.5" fill="#77734e"/><rect x="921" y="154.25" width="4" height="1.5" fill="#77734e"/><rect x="926" y="154.25" width="2" height="1.5" fill="#77734e"/><rect x="929" y="154.25" width="6" height="1.5" fill="#77734e"/><rect x="936" y="154.25" width="5" height="1.5" fill="#77734e"/><rect x="919" y="156.25" width="1" height="1.5" fill="#77734e"/><rect x="917" y="158.25" width="2" height="1.5" fill="#5e5e64"/><rect x="921" y="158.25" width="4" height="1.5" fill="#77734e"/><rect x="926" y="158.25" width="2" height="1.5" fill="#5e5e64"/><rect x="919" y="160.25" width="7" height="1.5" fill="#77734e"/><rect x="927" y="160.25" width="2" height="1.5" fill="#77734e"/><rect x="930" y="160.25" width="6" height="1.5" fill="#77734e"/><rect x="937" y="160.25" width="2" height="1.5" fill="#77734e"/><rect x="917" y="162.25" width="2" height="1.5" fill="#5e5e64"/><rect x="921" y="162.25" width="3" height="1.5" fill="#77734e"/><rect x="925" y="162.25" width="2" height="1.5" fill="#5e5e64"/><rect x="917" y="164.25" width="1" height="1.5" fill="#77734e"/><rect x="915" y="166.25" width="1" height="1.5" fill="#77734e"/><rect x="913" y="168.25" width="1" height="1.5" fill="#77734e"/><rect x="911" y="170.25" width="1" height="1.5" fill="#77734e"/><rect x="909" y="172.25" width="1" height="1.5" fill="#77734e"/></svg></div><div class="r" style="left:1544px;top:161px;width:21px;height:656px;background:#f1f1f1"></div>
<div class="r" style="left:1546px;top:182px;width:17px;height:441px;background:#c1c1c1"></div>
<svg class="a" style="left:1549.5px;top:169px" width="10" height="6" viewBox="0 0 10 6"><path d="M0 6 L5 1 L10 6 Z" fill="#a3a3a3"/></svg><svg class="a" style="left:1549.5px;top:802px" width="10" height="6" viewBox="0 0 10 6"><path d="M0 0 L5 5 L10 0 Z" fill="#505050"/></svg><div class="t " style="left:1398.5px;top:838.98px;font-size:15.5px;color:#555555;">Cancel</div>
<div class="r" style="left:1479px;top:829px;width:61px;height:38px;background:#2168d8;border-radius:6px"></div>
<div class="t " style="left:1498.8px;top:838.88px;font-size:15.5px;color:#ffffff;">OK</div>
<svg class="a" style="left:18px;top:84px" width="40" height="40" viewBox="0 0 40 40">
<path d="M24.6 9.2 A13.8 13.6 0 1 0 21.7 35.2" fill="none" stroke="#1f3248" stroke-width="2.3" stroke-linecap="round"/>
<path d="M31 15.8 A9.6 9.6 0 0 1 16.6 27.5" fill="none" stroke="#1f3248" stroke-width="2.3" stroke-linecap="round"/>
<path d="M14.3 25.8 L15.6 21.8 L27.6 10.6 L30 13 L18.2 24.3 Z" fill="#1f3248"/>
<circle cx="31.7" cy="8.9" r="1.7" fill="#1f3248"/>
</svg>
<svg class="a" style="left:22px;top:142px" width="30" height="30" viewBox="0 0 30 30">
<g transform="translate(15.5 16) rotate(45) scale(0.94)" fill="#1f3248">
<rect x="-2.5" y="-2.5" width="5" height="5"/>
<rect x="-2.8" y="-7.6" width="10.4" height="3.6" rx="1"/>
<rect x="4" y="-2.8" width="3.6" height="10.4" rx="1"/>
<rect x="-7.6" y="4" width="10.4" height="3.6" rx="1"/>
<rect x="-7.6" y="-7.6" width="3.6" height="10.4" rx="1"/>
</g></svg>
<svg class="a" style="left:210px;top:143px" width="30" height="30" viewBox="0 0 30 30">
<path d="M7.2 15.3 V13.2 Q7.2 10.6 9.8 10.6 H18.5" fill="none" stroke="#1f3248" stroke-width="2" stroke-linecap="round"/>
<path d="M17.6 7 L22.3 10.6 L17.6 14.2 Z" fill="#1f3248"/>
<path d="M24.4 15 V17 Q24.4 19.6 21.8 19.6 H13" fill="none" stroke="#1f3248" stroke-width="2" stroke-linecap="round"/>
<path d="M14 16 L9.3 19.6 L14 23.2 Z" fill="#1f3248"/>
</svg>
<svg class="a" style="left:22px;top:200px" width="30" height="30" viewBox="0 0 30 30">
<path d="M7.2 22.2 L15.8 12.6" stroke="#1f3248" stroke-width="3.4" stroke-linecap="round"/>
<path d="M15.6 12.8 L17.3 10.9" stroke="#1f3248" stroke-width="3.4" stroke-linecap="round"/>
<path d="M15.9 12.5 L17 11.3" stroke="#f6f8fb" stroke-width="1.1" stroke-linecap="round"/>
<circle cx="11.2" cy="9.2" r="1.3" fill="#1f3248"/>
<circle cx="17.4" cy="6.3" r="1.3" fill="#1f3248"/>
<circle cx="22.8" cy="10.6" r="1.2" fill="#1f3248"/>
<circle cx="20.8" cy="17.2" r="1.05" fill="#1f3248"/>
</svg>
<svg class="a" style="left:22px;top:256px" width="30" height="30" viewBox="0 0 30 30"><rect x="5.95" y="6.3" width="4.1" height="4.1" rx="1.6" fill="#1f3248"/><rect x="5.95" y="13.149999999999999" width="4.1" height="4.1" rx="1.6" fill="#1f3248"/><rect x="5.95" y="19.95" width="4.1" height="4.1" rx="1.6" fill="#1f3248"/><rect x="12.95" y="6.3" width="4.1" height="4.1" rx="1.6" fill="#1f3248"/><rect x="12.95" y="13.149999999999999" width="4.1" height="4.1" rx="1.6" fill="#1f3248"/><rect x="12.95" y="19.95" width="4.1" height="4.1" rx="1.6" fill="#1f3248"/><rect x="19.75" y="6.3" width="4.1" height="4.1" rx="1.6" fill="#1f3248"/><rect x="19.75" y="13.149999999999999" width="4.1" height="4.1" rx="1.6" fill="#1f3248"/><rect x="19.75" y="19.95" width="4.1" height="4.1" rx="1.6" fill="#1f3248"/></svg>
<svg class="a" style="left:22px;top:313px" width="30" height="30" viewBox="0 0 30 30">
<path d="M15 5.6 L23.4 10.4 V19.8 L15 24.4 L6.6 19.8 V10.4 Z" fill="none" stroke="#1f3248" stroke-width="1.6" stroke-linejoin="round"/>
<path d="M6.8 10.5 L15 14.8 L23.2 10.5" fill="none" stroke="#1f3248" stroke-width="1.6"/>
<path d="M15 15 V24" stroke="#5a6a7c" stroke-width="1.4"/>
<path d="M15 7 V11.5" stroke="#8a96a3" stroke-width="1.3"/>
<path d="M9.5 17.5 L13 15.8 M20.5 17.5 L17 15.8" stroke="#7f8b98" stroke-width="1"/>
</svg>
<svg class="a" style="left:22px;top:370px" width="30" height="30" viewBox="0 0 30 30">
<g fill="none" stroke="#3a7ee0" stroke-width="1.75" stroke-linecap="round">
<circle cx="7.2" cy="11.9" r="2.45"/>
<circle cx="22.8" cy="18.3" r="2.45"/>
<path d="M9.2 10.3 L11.6 7.9 C13.6 5.9 17.4 5.6 19.4 7.9 C21.1 9.9 20.8 12.8 19 14.6 L15.6 18"/>
<path d="M14.4 12.1 L10.9 15.6 C8.9 17.6 8.9 21.3 11.1 23.3 C13.2 25.3 16.9 25.1 19 23 L20.9 20.2"/>
</g></svg>
<svg class="a" style="left:22px;top:574px" width="30" height="30" viewBox="0 0 30 30">
<path d="M23.9 5.6 C20 5.8 15.5 7.5 12.3 11.2 C10.6 13.2 9.6 15.6 9.4 17.8 L12.1 20.4 C14.3 20.2 16.7 19.3 18.7 17.6 C22.5 14.4 24 9.8 23.9 5.6 Z" fill="#1f3248"/>
<circle cx="18" cy="11.1" r="1.35" fill="#f6f8fb"/>
<path d="M6.1 15.8 L9.9 11.3 L10.5 11.6 L7.2 16 Z" fill="#1f3248" stroke="#1f3248" stroke-width="1.3" stroke-linejoin="round"/>
<path d="M13.6 23.6 L18.6 18.8 L18.2 18.3 L14 23 Z" fill="#1f3248" stroke="#1f3248" stroke-width="1.3" stroke-linejoin="round"/>
<path d="M7.4 22.2 L9 20.4" stroke="#1f3248" stroke-width="2" stroke-linecap="round"/>
</svg>
<svg class="a" style="left:22px;top:630px" width="30" height="30" viewBox="0 0 30 30">
<path d="M4.4 10.2 C6.5 9.4 9.5 9.3 11.5 11.4 L12.6 12.2 L22.4 6.1 L18.4 13.2 L25.2 15.3 C22.5 16.9 19.5 17.5 16.2 17.6 L16.8 23.4 C14.8 20.8 12.3 19.8 10 18.7 C7.8 17.4 7.2 14.8 7.6 11.4 C6.5 10.9 5.5 10.6 4.4 10.2 Z" fill="#1f3248"/>
</svg>
<svg class="a" style="left:22px;top:687px" width="30" height="30" viewBox="0 0 30 30">
<path d="M5.6 7.2 H11.6 C12.2 7.2 12.7 7.5 13 7.9 L14.6 10.1 H24.4 C25.2 10.1 25.9 10.8 25.9 11.6 V21.9 C25.9 22.7 25.2 23.4 24.4 23.4 H5.6 C4.8 23.4 4.1 22.7 4.1 21.9 V8.7 C4.1 7.9 4.8 7.2 5.6 7.2 Z" fill="#1f3248"/>
</svg>
<svg class="a" style="left:22px;top:799px" width="30" height="30" viewBox="0 0 30 30">
<path d="M13 6.1 C15.3 6.1 16.9 7.9 16.9 10.1 C16.9 11.6 16.4 12.8 15.2 13.6 L14.9 15.2 L14.8 20.9 H4.1 C5.5 19 7.6 17.2 10.8 16.5 L11.2 13.8 C9.7 12.9 9 11.6 9 10.1 C9 7.9 10.7 6.1 13 6.1 Z" fill="#1f3248"/>
<g transform="translate(20.7 19.9)">
<path d="M0 -5 L4.7 -2.5 V2.6 L0 5.1 L-4.7 2.6 V-2.5 Z" fill="#1f3248"/>
<path d="M-4.5 -2.4 L0 0 L4.5 -2.4 M0 0 V5" fill="none" stroke="#f6f8fb" stroke-width="0.9"/>
</g></svg>
<svg class="a" style="left:165px;top:800px" width="30" height="30" viewBox="0 0 30 30">
<path d="M9.6 9.2 H7.5 V19.8 H18 V18" fill="none" stroke="#a9b0b9" stroke-width="2"/>
<path d="M11.9 8.1 H19.2 V15.5 M19 8.3 L11.6 15.7" fill="none" stroke="#a9b0b9" stroke-width="2"/>
</svg>

</body></html>
